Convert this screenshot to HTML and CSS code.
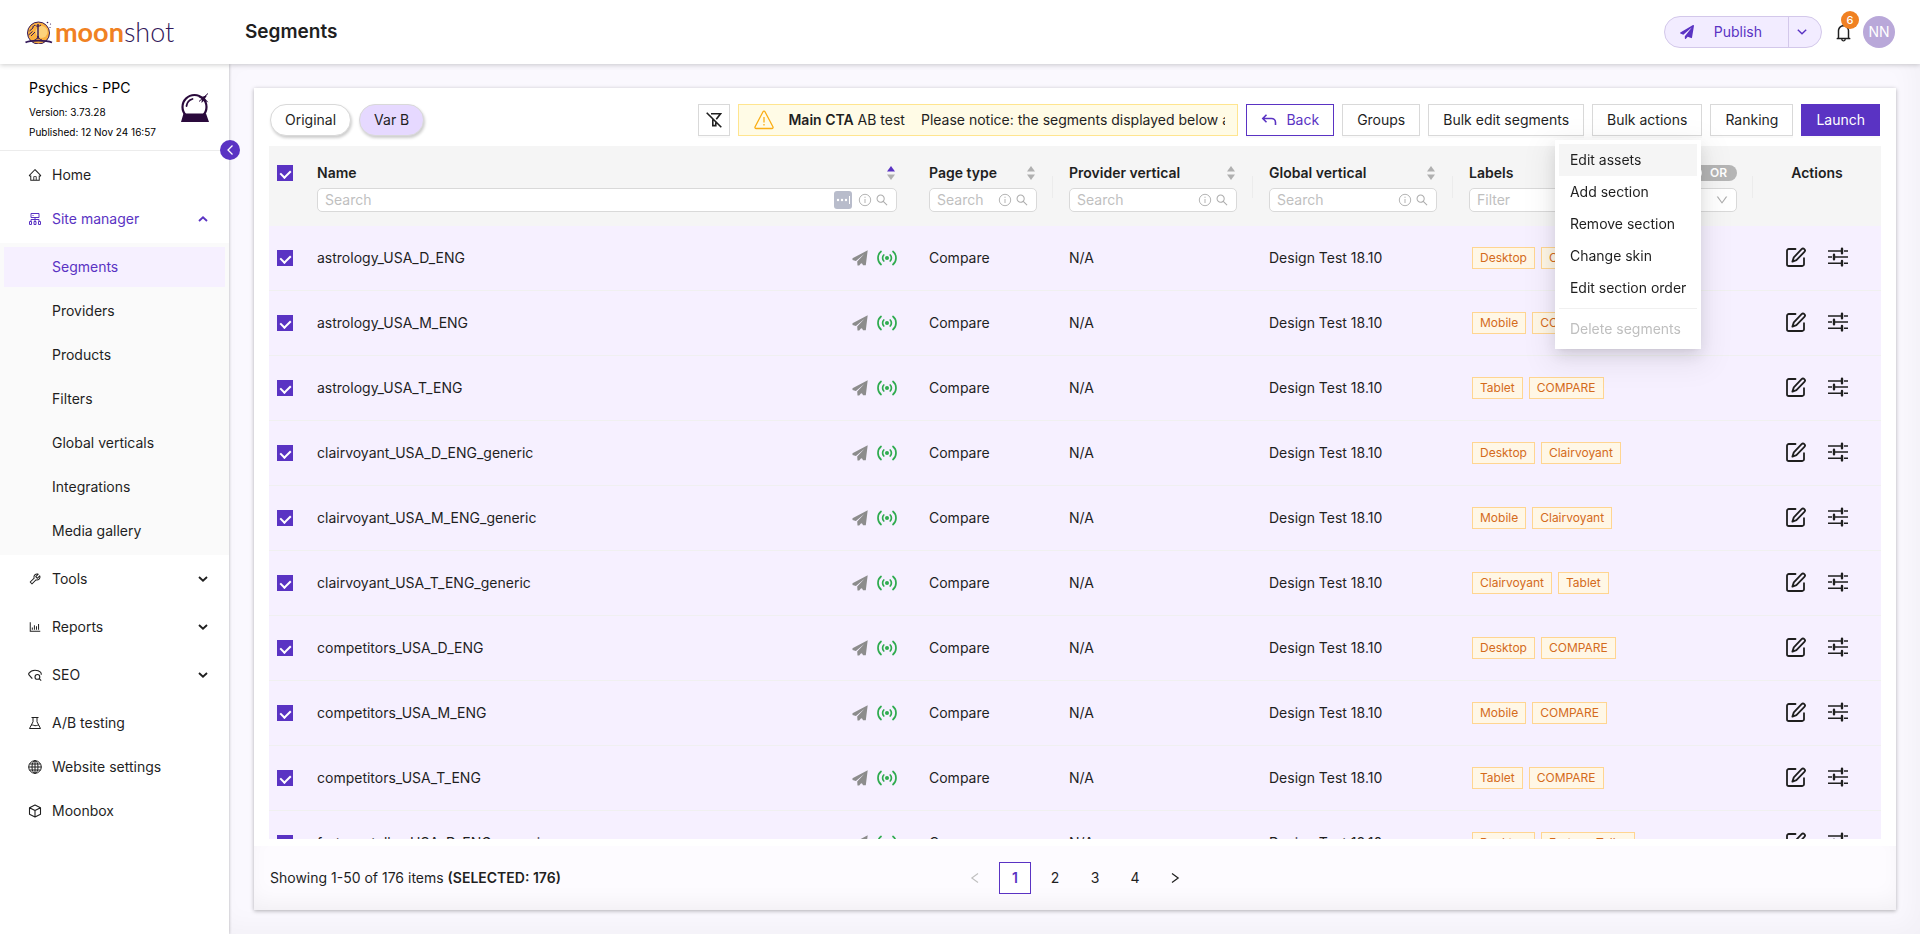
FILE: index.html
```html
<!DOCTYPE html>
<html lang="en">
<head>
<meta charset="utf-8">
<title>Segments</title>
<link rel="stylesheet" href="styles.css">
</head>
<body>
<svg class="sprite" aria-hidden="true">
  <symbol id="i-home" viewBox="0 0 1024 1024"><path d="M946.5 505L560.1 118.8l-25.9-25.9a31.5 31.5 0 00-44.4 0L77.5 505a63.9 63.9 0 00-18.8 46c.4 35.2 29.7 63.3 64.9 63.3h42.5V940h691.8V614.3h43.4c17.1 0 33.2-6.7 45.3-18.8a63.6 63.6 0 0018.7-45.3c0-17-6.7-33.1-18.8-45.2zM568 868H456V664h112v204zm217.9-325.7V868H632V640c0-22.1-17.9-40-40-40H432c-22.1 0-40 17.9-40 40v228H238.1V542.3h-96l370-369.7 23.1 23.1L882 542.3h-96.1z"/></symbol>
  <symbol id="i-site" viewBox="0 0 14 14"><g fill="none" stroke="currentColor"><path d="M3 1.5h8v4H3zM7 5.5v4M3 9.500V7.500h8v2"/><path d="M1.500 9.500h2v3h-2zM6 9.500h2v3H6zM10.500 9.500h2v3h-2z"/></g><path d="M4.500 3h1v1h-1z"/></symbol>
  <symbol id="i-tool" viewBox="0 0 1024 1024"><path d="M876.6 239.5c-.5-.9-1.2-1.8-2-2.5-5-5-13.1-5-18.1 0L684.2 409.3l-67.9-67.9L788.7 169c.8-.8 1.4-1.6 2-2.5 3.6-6.1 1.6-13.9-4.5-17.5-98.2-58-226.8-44.7-311.3 39.7-67 67-89.2 162-66.5 247.4l-293 293c-3 3-2.800 7.9.3 11l169.7 169.7c3.100 3.100 8.100 3.300 11 .3l292.9-292.9c85.500 22.800 180.500.7 247.6-66.400 84.400-84.500 97.700-213.100 39.700-311.300zM786 499.800c-58.100 58.100-145.300 69.300-214.600 33.600l-8.800 8.800-.1-.1-274 274.100-79.200-79.200 230.100-230.100s0 .1.1.1l52.800-52.800c-35.700-69.300-24.500-156.500 33.600-214.600a184.200 184.200 0 01144-53.500L537 318.900a32.050 32.050 0 000 45.300l124.500 124.500a32.050 32.050 0 0045.300 0l132.800-132.800c3.700 51.800-14.400 104.800-53.600 143.900z"/></symbol>
  <symbol id="i-chart" viewBox="0 0 1024 1024"><path d="M888 792H200V168c0-4.400-3.600-8-8-8h-56c-4.400 0-8 3.600-8 8v688c0 4.400 3.600 8 8 8h752c4.400 0 8-3.600 8-8v-56c0-4.400-3.600-8-8-8zM280 552h72v160h-72zM432 376h72v336h-72zM584 454h72v258h-72zM736 296h72v416h-72z"/></symbol>
  <symbol id="i-seo" viewBox="0 0 14 14"><g fill="none" stroke="currentColor" stroke-width="1.100"><path d="M4.500 10.200H3.800L1 6.800C.6 6.300.6 5.500 1.200 5 2.500 3 4.500 2.200 7 2.200s4.200.6 5.500 2c.6.600.8 1.500.8 2.500"/><circle cx="9.400" cy="8.900" r="2.400"/><path d="M11.200 10.700l2 2"/></g></symbol>
  <symbol id="i-flask" viewBox="0 0 14 14"><path fill="none" stroke="currentColor" d="M3.500 1.500h7M5 1.500v4.300L1.500 12.500h11L9 5.800V1.500M3.300 9.300c2-1 3 1 5 .3 1-.3 1.400-.6 2.300-.2"/></symbol>
  <symbol id="i-globe" viewBox="0 0 14 14"><g fill="none" stroke="currentColor"><circle cx="7" cy="7" r="6.300"/><ellipse cx="7" cy="7" rx="3" ry="6.300"/><path d="M7 .7v12.600M.7 7h12.600M1.500 4h11M1.500 10h11"/></g></symbol>
  <symbol id="i-cube" viewBox="0 0 14 14"><path fill="none" stroke="currentColor" stroke-width="1.100" stroke-linejoin="round" d="M7 1l5.500 2.700v6.600L7 13l-5.500-2.700V3.700zM1.500 3.700L7 6.500l5.500-2.800M7 6.500V13"/></symbol>
  <symbol id="i-chev" viewBox="0 0 10 6"><path fill="none" stroke="currentColor" stroke-width="1.900" d="M1 1l4 3.600L9 1"/></symbol>
  <symbol id="i-chev-thin" viewBox="0 0 10 6"><path fill="none" stroke="currentColor" stroke-width="1.400" d="M.8.8L5 4.800 9.200.8"/></symbol>
  <symbol id="i-left" viewBox="0 0 8 12"><path fill="none" stroke="currentColor" stroke-width="1.300" d="M6.500 1.500L2 6l4.500 4.500"/></symbol>
  <symbol id="i-down" viewBox="0 0 1024 1024"><path d="M884 256h-75c-5.100 0-9.900 2.500-12.900 6.600L512 654.200 227.900 262.600c-3-4.100-7.800-6.600-12.900-6.600h-75c-6.500 0-10.300 7.400-6.500 12.700l352.600 486.100c12.800 17.600 39 17.600 51.700 0l352.600-486.100c3.900-5.300.1-12.700-6.400-12.700z"/></symbol>
  <symbol id="i-prev" viewBox="0 0 12 12"><path fill="none" stroke="currentColor" stroke-width="1.100" d="M9 1.500L2.800 6 9 10.500"/></symbol>
  <symbol id="i-next" viewBox="0 0 12 12"><path fill="none" stroke="currentColor" stroke-width="1.200" d="M3 1.500L9.200 6 3 10.500"/></symbol>
  <symbol id="i-send" viewBox="0 0 512 512"><path d="M476 3.200L12.500 270.600c-18.100 10.400-15.800 35.600 2.200 43.200L121 358.400l287.300-253.200c5.500-4.900 13.300 2.600 8.600 8.300L176 407v80.500c0 23.600 28.500 32.900 42.500 15.800L282 426l124.600 52.200c14.200 6 30.400-2.900 33-18.200l72-432C515 7.800 493.300-6.800 476 3.200z"/></symbol>
  <symbol id="i-plane" viewBox="0 0 16 16"><path d="M15.700.3L.5 8.300v1.600l3.400 1.200L12.300 4 5.200 11.600l.3 3.900h1.700l1.900-2.300 1.200.6.700 1.400h2.800z"/></symbol>
  <symbol id="i-live" viewBox="0 0 20 16"><g fill="none" stroke="currentColor" stroke-width="1.700" stroke-linecap="round"><path d="M4 1.500C1.800 3.200 1 5.500 1 8s.8 4.800 3 6.500M16 1.500c2.200 1.700 3 4 3 6.500s-.8 4.800-3 6.500M6.800 5C5.200 6.500 5.200 9.500 6.800 11M13.200 5c1.600 1.500 1.600 4.500 0 6"/></g><circle cx="10" cy="8" r="2"/></symbol>
  <symbol id="i-bell" viewBox="0 0 1024 1024"><path d="M816 768h-24V428c0-141.100-104.300-257.800-240-277.200V112c0-22.100-17.900-40-40-40s-40 17.900-40 40v38.800C336.300 170.200 232 286.900 232 428v340h-24c-17.700 0-32 14.300-32 32v32c0 4.400 3.600 8 8 8h216c0 61.800 50.200 112 112 112s112-50.200 112-112h216c4.400 0 8-3.600 8-8v-32c0-17.700-14.300-32-32-32zM512 888c-26.500 0-48-21.500-48-48h96c0 26.500-21.500 48-48 48zM304 768V428c0-55.600 21.600-107.800 60.900-147.100S456.400 220 512 220c55.600 0 107.800 21.600 147.100 60.900S720 372.400 720 428v340H304z"/></symbol>
  <symbol id="i-search" viewBox="0 0 1024 1024"><path d="M909.600 854.500L649.900 594.800C690.200 542.700 712 479 712 412c0-80.200-31.300-155.400-87.900-212.100-56.600-56.700-132-87.900-212.100-87.900s-155.500 31.300-212.100 87.900C143.200 256.500 112 331.800 112 412c0 80.100 31.300 155.500 87.900 212.100C256.500 680.800 331.800 712 412 712c67 0 130.600-21.800 182.700-62l259.700 259.600a8.200 8.200 0 0011.600 0l43.600-43.500a8.200 8.200 0 000-11.600zM570.400 570.400C528 612.700 471.800 636 412 636s-116-23.300-158.400-65.600C211.300 528 188 471.800 188 412s23.300-116.100 65.600-158.400C296 211.300 352.200 188 412 188s116.100 23.200 158.400 65.600S636 352.200 636 412s-23.300 116.100-65.600 158.400z"/></symbol>
  <symbol id="i-info" viewBox="0 0 14 14"><g fill="none" stroke="currentColor" stroke-width=".9"><circle cx="7" cy="7" r="5.700"/><path d="M7 6v4M7 3.700v1.200"/></g></symbol>
  <symbol id="i-sort" viewBox="0 0 8 14"><path class="sort-up" d="M4 0l4 5.500H0z"/><path d="M4 14L0 8.500h8z"/></symbol>
  <symbol id="i-edit" viewBox="0 0 20 20"><path fill="none" stroke="currentColor" stroke-width="1.800" stroke-linejoin="round" stroke-linecap="round" d="M9.500 2H2.800A1.800 1.800 0 001 3.800v13.400A1.800 1.800 0 002.800 19h13.400a1.800 1.800 0 001.800-1.800v-6M15.600 2.200a1.900 1.900 0 012.800 2.700l-8 8.200-4 1.500 1.400-4.200z"/></symbol>
  <symbol id="i-sliders" viewBox="0 0 20 20"><path fill="none" stroke="currentColor" stroke-width="1.500" d="M0 4h13M16 4h4M0 10h4M7 10h13M0 16.200h13M16 16.200h4"/><path fill="none" stroke="currentColor" stroke-width="2.400" stroke-linecap="round" d="M14 1.800v4.400M6 7.800v4.400M14 14v4.400"/></symbol>
  <symbol id="i-filter-off" viewBox="0 0 16 16"><path fill="none" stroke="currentColor" stroke-width="1.600" d="M.7.7l14.600 14.600M5 1.800h9.500L10.300 7.300M6.800 7.600v6h3v-3"/></symbol>
  <symbol id="i-warn" viewBox="0 0 20 20"><path fill="none" stroke="currentColor" stroke-width="1.300" stroke-linejoin="round" d="M10 1.200c.5 0 .8.200 1 .6l7.900 15c.4.900 0 1.700-1 1.700H2.100c-1 0-1.400-.8-1-1.700l7.900-15c.2-.4.500-.6 1-.6z"/><path fill="none" stroke="currentColor" stroke-width="1.300" d="M10 7v5.500M10 14v1.500"/></symbol>
  <symbol id="i-back" viewBox="0 0 16 12"><path fill="none" stroke="currentColor" stroke-width="1.600" d="M5.500.8L1.800 4.500l3.700 3.700M2 4.500h8.500a4 4 0 014 4V11"/></symbol>
</svg>

<div class="app">
  <header class="topbar">
    <a class="logo" href="#" aria-label="moonshot">
      <svg class="logo-mark" viewBox="0 0 28 24">
        <circle cx="13.500" cy="13" r="11" fill="#fbb040" stroke="#33195a" stroke-width="1"/>
        <circle cx="16.500" cy="12" r="6" fill="#fdd27b"/>
        <g fill="none" stroke="#33195a"><path stroke-width="1.400" d="M13 4v15"/><path d="M10.500 5.500c1 1 4 1 5.500-.5M4.500 11l4-3.500M3.500 15l4-3.500M6 16l4-4M7 7.500l3-2.500M9.500 20c2-.5 3-2 3.500-4 .5 2 1.500 3.500 4 4"/><path stroke-width="1.800" d="M.5 22.500c4-2.500 21-2.500 26.500 0"/></g>
        <g fill="#33195a"><circle cx="22.500" cy="2.500" r=".8"/><circle cx="25.500" cy="4" r=".6"/><circle cx="25" cy="7.500" r=".6"/></g>
      </svg>
      <span class="logo-text"><b>moon</b>shot</span>
    </a>
    <h1>Segments</h1>
    <div class="topbar-right">
      <div class="publish">
        <button class="publish-main"><svg class="ic14"><use href="#i-send"/></svg><span>Publish</span></button>
        <button class="publish-more" aria-label="More publish options"><svg class="chev"><use href="#i-chev-thin"/></svg></button>
      </div>
      <button class="bell" aria-label="Notifications"><svg><use href="#i-bell"/></svg><span class="badge">6</span></button>
      <span class="avatar">NN</span>
    </div>
  </header>

  <aside class="sidebar">
    <div class="site">
      <div class="site-text"><p class="site-name">Psychics - PPC</p><p>Version: 3.73.28</p><p>Published: 12 Nov 24 16:57</p></div>
      <svg class="ball" viewBox="0 0 30 32"><circle cx="14.500" cy="15" r="12" fill="#fff" stroke="#2a0a3c" stroke-width="2.200"/><path fill="#2a0a3c" d="M3.500 21.500h22.500L29 30H1zM27 3.500l-2 3 3.500 4-4.500-2-2.500 2.500.3-4L17.500 4.500l4.500.3z"/><path d="M28 1.500l-9 8" stroke="#2a0a3c"/><path d="M6.500 14c.5-3.500 2.500-6 6-7" fill="none" stroke="#2a0a3c" stroke-width="1.800" stroke-linecap="round"/></svg>
    </div>
    <nav class="menu">
      <a href="#"><svg class="ic14"><use href="#i-home"/></svg>Home</a>
      <a href="#" class="open"><svg class="ic14"><use href="#i-site"/></svg>Site manager<svg class="chev up"><use href="#i-chev"/></svg></a>
      <div class="submenu">
        <a href="#" class="active">Segments</a><a href="#">Providers</a><a href="#">Products</a><a href="#">Filters</a><a href="#">Global verticals</a><a href="#">Integrations</a><a href="#">Media gallery</a>
      </div>
      <a href="#" class="group"><svg class="ic14"><use href="#i-tool"/></svg>Tools<svg class="chev"><use href="#i-chev"/></svg></a>
      <a href="#" class="group"><svg class="ic14"><use href="#i-chart"/></svg>Reports<svg class="chev"><use href="#i-chev"/></svg></a>
      <a href="#" class="group"><svg class="ic14"><use href="#i-seo"/></svg>SEO<svg class="chev"><use href="#i-chev"/></svg></a>
      <a href="#"><svg class="ic14"><use href="#i-flask"/></svg>A/B testing</a>
      <a href="#"><svg class="ic14"><use href="#i-globe"/></svg>Website settings</a>
      <a href="#"><svg class="ic14"><use href="#i-cube"/></svg>Moonbox</a>
    </nav>
    <button class="collapse" aria-label="Collapse sidebar"><svg><use href="#i-left"/></svg></button>
  </aside>

  <main class="content">
    <section class="card">
      <div class="toolbar">
        <button class="pill">Original</button>
        <button class="pill selected">Var B</button>
        <div class="tools">
          <button class="btn square" aria-label="Clear filters"><svg class="ic16"><use href="#i-filter-off"/></svg></button>
          <div class="notice"><svg class="ic20"><use href="#i-warn"/></svg><div class="notice-text"><span><b>Main CTA</b> AB test</span><span>Please notice: the segments displayed below are</span></div></div>
          <button class="btn outline"><svg class="back"><use href="#i-back"/></svg>Back</button>
          <button class="btn">Groups</button>
          <button class="btn">Bulk edit segments</button>
          <div class="dropdown">
            <button class="btn">Bulk actions</button>
            <div class="dropdown-menu">
              <button class="hover">Edit assets</button><button>Add section</button><button>Remove section</button><button>Change skin</button><button>Edit section order</button>
              <hr>
              <button disabled>Delete segments</button>
            </div>
          </div>
          <button class="btn">Ranking</button>
          <button class="btn primary">Launch</button>
        </div>
      </div>

      <div class="table-wrap">
        <table>
          <colgroup><col class="c-check"><col><col class="c-page"><col class="c-mid"><col class="c-mid"><col class="c-labels"><col class="c-actions"></colgroup>
          <thead>
            <tr>
              <th class="check"><input type="checkbox" checked aria-label="Select all"></th>
              <th><div class="th"><label for="f-name">Name</label><svg class="sort asc"><use href="#i-sort"/></svg></div><div class="field"><input id="f-name" type="text" placeholder="Search"><svg class="autofill" viewBox="0 0 18 18"><rect width="18" height="18" rx="3" fill="#b8bccb"/><g fill="#fff"><circle cx="4" cy="9" r="1.200"/><circle cx="8" cy="9" r="1.200"/><circle cx="12" cy="9" r="1.200"/><path d="M15 5h1v8h-1z"/></g></svg><svg class="ic14"><use href="#i-info"/></svg><svg class="ic14"><use href="#i-search"/></svg></div></th>
              <th class="div"><div class="th"><label for="f-page">Page type</label><svg class="sort"><use href="#i-sort"/></svg></div><div class="field"><input id="f-page" type="text" placeholder="Search"><svg class="ic14"><use href="#i-info"/></svg><svg class="ic14"><use href="#i-search"/></svg></div></th>
              <th class="div"><div class="th"><label for="f-prov">Provider vertical</label><svg class="sort"><use href="#i-sort"/></svg></div><div class="field"><input id="f-prov" type="text" placeholder="Search"><svg class="ic14"><use href="#i-info"/></svg><svg class="ic14"><use href="#i-search"/></svg></div></th>
              <th class="div"><div class="th"><label for="f-glob">Global vertical</label><svg class="sort"><use href="#i-sort"/></svg></div><div class="field"><input id="f-glob" type="text" placeholder="Search"><svg class="ic14"><use href="#i-info"/></svg><svg class="ic14"><use href="#i-search"/></svg></div></th>
              <th class="div"><div class="th"><label for="f-lab">Labels</label><button class="switch" role="switch" aria-checked="false">OR</button></div><div class="field"><select id="f-lab"><option>Filter</option></select><svg class="ic14"><use href="#i-down"/></svg></div></th>
              <th class="actions-head">Actions</th>
            </tr>
          </thead>
          <tbody>
            <tr><td class="check"><input type="checkbox" checked aria-label="Select row"></td><td><div class="name">astrology_USA_D_ENG<svg class="plane"><use href="#i-plane"/></svg><svg class="live"><use href="#i-live"/></svg></div></td><td>Compare</td><td>N/A</td><td>Design Test 18.10</td><td><div class="tags"><span>Desktop</span><span>COMPARE</span></div></td><td><div class="acts"><button aria-label="Edit"><svg><use href="#i-edit"/></svg></button><button aria-label="Settings"><svg><use href="#i-sliders"/></svg></button></div></td></tr>
            <tr><td class="check"><input type="checkbox" checked aria-label="Select row"></td><td><div class="name">astrology_USA_M_ENG<svg class="plane"><use href="#i-plane"/></svg><svg class="live"><use href="#i-live"/></svg></div></td><td>Compare</td><td>N/A</td><td>Design Test 18.10</td><td><div class="tags"><span>Mobile</span><span>COMPARE</span></div></td><td><div class="acts"><button aria-label="Edit"><svg><use href="#i-edit"/></svg></button><button aria-label="Settings"><svg><use href="#i-sliders"/></svg></button></div></td></tr>
            <tr><td class="check"><input type="checkbox" checked aria-label="Select row"></td><td><div class="name">astrology_USA_T_ENG<svg class="plane"><use href="#i-plane"/></svg><svg class="live"><use href="#i-live"/></svg></div></td><td>Compare</td><td>N/A</td><td>Design Test 18.10</td><td><div class="tags"><span>Tablet</span><span>COMPARE</span></div></td><td><div class="acts"><button aria-label="Edit"><svg><use href="#i-edit"/></svg></button><button aria-label="Settings"><svg><use href="#i-sliders"/></svg></button></div></td></tr>
            <tr><td class="check"><input type="checkbox" checked aria-label="Select row"></td><td><div class="name">clairvoyant_USA_D_ENG_generic<svg class="plane"><use href="#i-plane"/></svg><svg class="live"><use href="#i-live"/></svg></div></td><td>Compare</td><td>N/A</td><td>Design Test 18.10</td><td><div class="tags"><span>Desktop</span><span>Clairvoyant</span></div></td><td><div class="acts"><button aria-label="Edit"><svg><use href="#i-edit"/></svg></button><button aria-label="Settings"><svg><use href="#i-sliders"/></svg></button></div></td></tr>
            <tr><td class="check"><input type="checkbox" checked aria-label="Select row"></td><td><div class="name">clairvoyant_USA_M_ENG_generic<svg class="plane"><use href="#i-plane"/></svg><svg class="live"><use href="#i-live"/></svg></div></td><td>Compare</td><td>N/A</td><td>Design Test 18.10</td><td><div class="tags"><span>Mobile</span><span>Clairvoyant</span></div></td><td><div class="acts"><button aria-label="Edit"><svg><use href="#i-edit"/></svg></button><button aria-label="Settings"><svg><use href="#i-sliders"/></svg></button></div></td></tr>
            <tr><td class="check"><input type="checkbox" checked aria-label="Select row"></td><td><div class="name">clairvoyant_USA_T_ENG_generic<svg class="plane"><use href="#i-plane"/></svg><svg class="live"><use href="#i-live"/></svg></div></td><td>Compare</td><td>N/A</td><td>Design Test 18.10</td><td><div class="tags"><span>Clairvoyant</span><span>Tablet</span></div></td><td><div class="acts"><button aria-label="Edit"><svg><use href="#i-edit"/></svg></button><button aria-label="Settings"><svg><use href="#i-sliders"/></svg></button></div></td></tr>
            <tr><td class="check"><input type="checkbox" checked aria-label="Select row"></td><td><div class="name">competitors_USA_D_ENG<svg class="plane"><use href="#i-plane"/></svg><svg class="live"><use href="#i-live"/></svg></div></td><td>Compare</td><td>N/A</td><td>Design Test 18.10</td><td><div class="tags"><span>Desktop</span><span>COMPARE</span></div></td><td><div class="acts"><button aria-label="Edit"><svg><use href="#i-edit"/></svg></button><button aria-label="Settings"><svg><use href="#i-sliders"/></svg></button></div></td></tr>
            <tr><td class="check"><input type="checkbox" checked aria-label="Select row"></td><td><div class="name">competitors_USA_M_ENG<svg class="plane"><use href="#i-plane"/></svg><svg class="live"><use href="#i-live"/></svg></div></td><td>Compare</td><td>N/A</td><td>Design Test 18.10</td><td><div class="tags"><span>Mobile</span><span>COMPARE</span></div></td><td><div class="acts"><button aria-label="Edit"><svg><use href="#i-edit"/></svg></button><button aria-label="Settings"><svg><use href="#i-sliders"/></svg></button></div></td></tr>
            <tr><td class="check"><input type="checkbox" checked aria-label="Select row"></td><td><div class="name">competitors_USA_T_ENG<svg class="plane"><use href="#i-plane"/></svg><svg class="live"><use href="#i-live"/></svg></div></td><td>Compare</td><td>N/A</td><td>Design Test 18.10</td><td><div class="tags"><span>Tablet</span><span>COMPARE</span></div></td><td><div class="acts"><button aria-label="Edit"><svg><use href="#i-edit"/></svg></button><button aria-label="Settings"><svg><use href="#i-sliders"/></svg></button></div></td></tr>
            <tr><td class="check"><input type="checkbox" checked aria-label="Select row"></td><td><div class="name">fortune_teller_USA_D_ENG_generic<svg class="plane"><use href="#i-plane"/></svg><svg class="live"><use href="#i-live"/></svg></div></td><td>Compare</td><td>N/A</td><td>Design Test 18.10</td><td><div class="tags"><span>Desktop</span><span>Fortune Teller</span></div></td><td><div class="acts"><button aria-label="Edit"><svg><use href="#i-edit"/></svg></button><button aria-label="Settings"><svg><use href="#i-sliders"/></svg></button></div></td></tr>
          </tbody>
        </table>
      </div>

      <footer class="card-foot">
        <p>Showing 1-50 of 176 items <b>(SELECTED: 176)</b></p>
        <nav class="pager" aria-label="Pages"><button disabled aria-label="Previous"><svg><use href="#i-prev"/></svg></button><button class="current">1</button><button>2</button><button>3</button><button>4</button><button aria-label="Next"><svg><use href="#i-next"/></svg></button></nav>
      </footer>
    </section>
  </main>
</div>
</body>
</html>
```
FILE: styles.css
```css
:root {
  --purple: #5a33c3;
  --text: #1f1f1f;
  --line: #d9d9d9;
}
* { box-sizing: border-box; }
body {
  margin: 0;
  font: 14px/22px Inter, "Liberation Sans", sans-serif;
  color: var(--text);
}
button, input, select { font: inherit; color: inherit; }
button { margin: 0; padding: 0; border: 0; background: none; cursor: pointer; }
a { color: inherit; text-decoration: none; }
p, h1 { margin: 0; }
b { font-weight: 600; }
svg { flex: none; fill: currentColor; }
.sprite { position: absolute; width: 0; height: 0; }
.ic14 { width: 14px; height: 14px; }
.ic16 { width: 16px; height: 16px; }
.ic20 { width: 20px; height: 20px; }
.chev { width: 10px; height: 6px; }
.chev.up { transform: rotate(180deg); }

.app {
  display: grid;
  grid-template: 64px minmax(0, 1fr) / 229px minmax(0, 1fr);
  height: 100vh;
}

/* Top bar */
.topbar {
  grid-column: 1 / -1;
  display: flex;
  align-items: center;
  padding: 0 25px;
  background: #fff;
  box-shadow: 0 1px 5px rgba(0, 0, 0, .2);
  z-index: 2;
}
.logo { display: flex; align-items: center; gap: 2px; width: 220px; }
.logo-mark { width: 28px; height: 24px; }
.logo-text { font: 300 27px/28px Lato, sans-serif; color: #33195a; }
.logo-text b { font-weight: 700; color: #f08122; }
h1 { font-size: 19px; line-height: 28px; font-weight: 600; }
.topbar-right { display: flex; align-items: center; margin-left: auto; }
.publish {
  display: flex;
  height: 32px;
  margin-right: 11px;
  border: 1px solid #d3c8ea;
  border-radius: 16px;
  background: #f2ecff;
  color: var(--purple);
}
.publish-main { display: flex; align-items: center; gap: 20px; padding: 0 26px 0 15px; }
.publish-more { display: flex; align-items: center; width: 33px; padding-left: 8px; border-left: 1px solid #d3c8ea; }
.bell { position: relative; display: flex; margin-right: 9px; }
.bell svg { width: 21px; height: 21px; }
.badge {
  position: absolute;
  left: 8px;
  top: -11px;
  width: 18px;
  border-radius: 9px;
  background: #f08122;
  color: #fff;
  font-size: 11px;
  line-height: 18px;
  font-weight: 500;
}
.avatar {
  width: 32px;
  border-radius: 50%;
  background: #b9a8d9;
  color: #fff;
  line-height: 32px;
  text-align: center;
}

/* Sidebar */
.sidebar { position: relative; background: #fff; box-shadow: 0 0 3px rgba(0, 0, 0, .3); z-index: 1; }
.site {
  display: flex;
  align-items: center;
  justify-content: space-between;
  height: 87px;
  padding: 2px 19px 0 29px;
  border-bottom: 1px solid #ececec;
}
.site p { font-size: 10px; line-height: 20px; color: #000; }
.site .site-name { font-size: 14px; line-height: 28px; }
.ball { width: 30px; height: 32px; }
.menu a {
  display: flex;
  align-items: center;
  height: 40px;
  margin: 4px;
  padding: 0 17px 0 24px;
}
.menu a > svg:first-child { margin-right: 10px; }
.menu .chev { margin-left: auto; }
.menu .open { color: var(--purple); }
.menu .group { margin: 4px 4px 8px; }
.submenu { padding: 4px 0; background: #fafafa; }
.submenu a { margin: 0 4px 4px; padding-left: 48px; }
.submenu a:last-child { margin-bottom: 0; }
.submenu .active { background: #f6f0ff; color: var(--purple); }
.collapse {
  position: absolute;
  top: 76px;
  right: -11px;
  display: grid;
  place-items: center;
  width: 20px;
  height: 20px;
  border-radius: 50%;
  background: var(--purple);
  color: #fff;
}
.collapse svg { width: 8px; height: 12px; }

/* Content */
.content {
  display: flex;
  min-height: 0;
  padding: 24px 24px 24px 25px;
  background: #faf8fe;
  box-shadow: inset -8px -8px 24px rgba(0, 0, 0, .03);
}
.card {
  display: flex;
  flex-direction: column;
  flex: 1;
  min-width: 0;
  background: #fff;
  box-shadow: 0 1px 4px rgba(0, 0, 0, .3);
}
.toolbar { display: flex; gap: 8px; padding: 16px 16px 10px; }
.pill {
  height: 32px;
  padding: 0 14px;
  border: 1px solid var(--line);
  border-radius: 16px;
  background: #fff;
  box-shadow: 1px 2px 3px rgba(0, 0, 0, .2);
}
.pill.selected { background: #e6d9ff; }
.tools { display: flex; flex: 1; justify-content: flex-end; gap: 8px; min-width: 0; }
.btn {
  display: flex;
  align-items: center;
  height: 32px;
  padding: 0 14px;
  border: 1px solid var(--line);
  background: #fff;
  box-shadow: 0 2px 0 rgba(0, 0, 0, .02);
  white-space: nowrap;
}
.btn.square { justify-content: center; width: 32px; padding: 0; }
.btn.outline { gap: 9px; border-color: var(--purple); color: var(--purple); }
.btn.primary { border-color: var(--purple); background: var(--purple); color: #fff; }
.back { width: 16px; height: 12px; }
.notice {
  display: flex;
  align-items: center;
  flex: 0 1 500px;
  gap: 14px;
  min-width: 0;
  height: 32px;
  padding: 0 12px 0 15px;
  border: 1px solid #ffe58f;
  background: #fffbe6;
}
.notice svg { color: #faad14; }
.notice-text { display: flex; gap: 16px; overflow: hidden; white-space: nowrap; }
.dropdown { position: relative; }
.dropdown-menu {
  position: absolute;
  top: 36px;
  right: 1px;
  z-index: 5;
  display: flex;
  flex-direction: column;
  padding: 4px;
  background: #fff;
  box-shadow: 0 6px 16px rgba(0, 0, 0, .1), 0 3px 6px -4px rgba(0, 0, 0, .12), 0 9px 28px 8px rgba(0, 0, 0, .06);
}
.dropdown-menu button { height: 32px; padding: 0 11px; text-align: left; white-space: nowrap; }
.dropdown-menu .hover { background: #f5f5f5; }
.dropdown-menu button:disabled { color: #bfbfbf; }
.dropdown-menu hr { width: 100%; margin: 4px 0; border: 0; border-top: 1px solid #f0f0f0; }

/* Table */
.table-wrap { flex: 1; min-height: 0; margin: 0 15px 7px; overflow: auto; scrollbar-width: none; }
table { width: 100%; border-collapse: separate; border-spacing: 0; table-layout: fixed; }
.c-check { width: 32px; }
.c-page { width: 140px; }
.c-mid { width: 200px; }
.c-labels { width: 300px; }
.c-actions { width: 128px; }
th, td { padding: 0 16px; text-align: left; }
th {
  position: sticky;
  top: 0;
  z-index: 1;
  height: 80px;
  padding-top: 16px;
  background: #f5f5f5;
  font-weight: 600;
  vertical-align: top;
}
th.div::after {
  content: "";
  position: absolute;
  top: 30px;
  right: 0;
  width: 1px;
  height: 22px;
  background: #ececec;
}
.actions-head { text-align: center; }
td { height: 65px; border-bottom: 1px solid #f0f0f0; background: #f6f0ff; }
th.check, td.check { padding-left: 8px; padding-right: 8px; }
[type="checkbox"] {
  appearance: none;
  display: block;
  position: relative;
  width: 16px;
  height: 16px;
  margin: 0;
  background: var(--purple);
}
th [type="checkbox"] { margin-top: 3px; }
[type="checkbox"]:checked::before {
  content: "";
  position: absolute;
  left: 5px;
  top: 3px;
  width: 5px;
  height: 8px;
  border: solid #fff;
  border-width: 0 2px 2px 0;
  transform: rotate(45deg);
}
.th { display: flex; align-items: center; justify-content: space-between; }
.sort { width: 8px; height: 14px; margin-right: 2px; color: #b0b0b0; }
.sort.asc { --up: var(--purple); }
.sort-up { fill: var(--up, currentColor); }
.field {
  display: flex;
  align-items: center;
  gap: 3px;
  height: 24px;
  margin-top: 4px;
  padding: 0 7px;
  border: 1px solid var(--line);
  border-radius: 5px;
  background: #fff;
  color: #adadad;
}
.field input, .field select {
  flex: 1;
  min-width: 0;
  height: 22px;
  padding: 0;
  border: 0;
  outline: 0;
  background: none;
  appearance: none;
  font-weight: 400;
}
.field select, .field input::placeholder { color: #bfbfbf; opacity: 1; }
.autofill { width: 18px; height: 18px; margin-right: 3px; }
.switch {
  position: relative;
  height: 16px;
  padding: 0 10px 0 22px;
  border-radius: 8px;
  background: #b5b5b5;
  color: #fff;
  font-size: 12px;
  line-height: 16px;
}
.switch::before {
  content: "";
  position: absolute;
  left: 2px;
  top: 2px;
  width: 12px;
  height: 12px;
  border-radius: 50%;
  background: #fff;
}
.name { display: flex; align-items: center; }
.plane { width: 16px; height: 16px; margin-left: auto; margin-right: 9px; color: #8c8c8c; }
.live { width: 20px; height: 16px; color: #2fab4f; }
.tags { display: flex; gap: 6px; padding-left: 3px; }
.tags span {
  padding: 0 7px;
  border: 1px solid #ffd591;
  background: #fff7e6;
  color: #d46b1c;
  font-size: 12px;
  line-height: 20px;
}
.acts { display: flex; justify-content: center; gap: 22px; padding-bottom: 2px; }
.acts svg { display: block; width: 20px; height: 20px; }

/* Card footer */
.card-foot {
  display: grid;
  grid-template-columns: 1fr auto 1fr;
  align-items: center;
  height: 64px;
  padding: 0 16px;
  background: #fdfbff;
  box-shadow: inset 0 -12px 24px -8px rgba(0, 0, 0, .06);
}
.pager { display: flex; gap: 8px; }
.pager button { display: grid; place-items: center; width: 32px; height: 32px; }
.pager .current { border: 1px solid var(--purple); background: #fff; color: var(--purple); font-weight: 600; }
.pager button:disabled { color: #bfbfbf; }
.pager svg { width: 12px; height: 12px; }
```
